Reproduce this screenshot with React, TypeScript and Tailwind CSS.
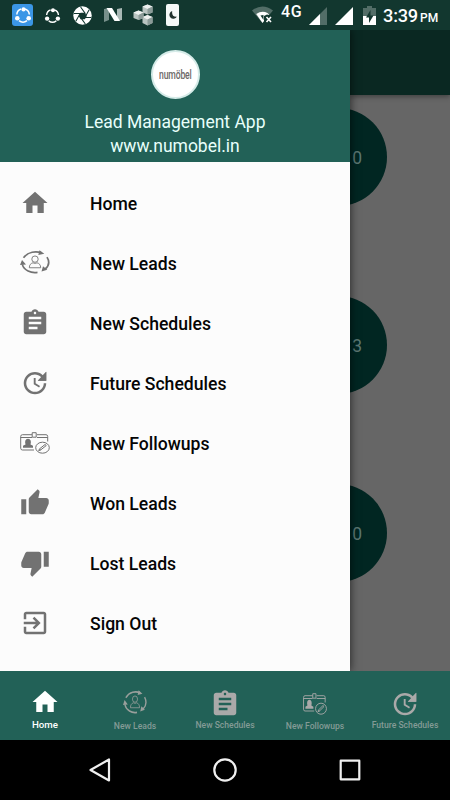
import React from "react";

type IconProps = { className?: string };

function HomeIcon({ className }: IconProps) {
  return (
    <svg viewBox="0 0 24 24" fill="currentColor" className={className}>
      <path d="M10 20v-6h4v6h5v-8h3L12 3 2 12h3v8z" />
    </svg>
  );
}

function LeadsIcon({ className }: IconProps) {
  return (
    <svg viewBox="0 0 30 25" preserveAspectRatio="none" className={className}>
      <g fill="none" stroke="currentColor" strokeWidth="1.700">
        <path d="M3.500 8C8 1.800 16 1 21.500 3" />
        <path d="M27 7.500c2.600 4.300 2 9-2 12.500" />
        <path d="M17.500 23.300C11 24.300 4 21.500 2.300 15" />
      </g>
      <path d="M19.500.3l4.800 3.700-6 1.200zM21.500 22.500l1.500-5.500 4.300 3.500zM0 15.500L2 10.500l4 4.500z" fill="currentColor" />
      <g fill="none" stroke="currentColor" strokeWidth="0.9">
        <ellipse cx="15" cy="9.500" rx="3.200" ry="3.300" />
        <path d="M9.300 18.500c0-3 1.500-4.600 3.700-5.200 1.500.8 2.700.8 4 0 2.200.6 3.700 2.200 3.700 5.200z" />
      </g>
    </svg>
  );
}

function ClipboardIcon({ className }: IconProps) {
  return (
    <svg viewBox="0 0 24 24" fill="currentColor" className={className}>
      <path d="M19 3h-4.180C14.400 1.840 13.300 1 12 1s-2.400.84-2.820 2H5c-1.100 0-2 .9-2 2v14c0 1.100.9 2 2 2h14c1.100 0 2-.9 2-2V5c0-1.100-.9-2-2-2zm-7 0c.55 0 1 .45 1 1s-.45 1-1 1-1-.45-1-1 .45-1 1-1zm2 14H7v-2h7v2zm3-4H7v-2h10v2zm0-4H7V7h10v2z" />
    </svg>
  );
}

function UpdateIcon({ className }: IconProps) {
  return (
    <svg viewBox="0 0 24 24" fill="currentColor" className={className}>
      <path d="M21 3v7.120h-6.780z" />
      <path d="M21 10.120h-6.780l2.740-2.820c-2.730-2.700-7.150-2.800-9.880-.1-2.730 2.710-2.730 7.080 0 9.790s7.150 2.710 9.880 0C18.320 15.650 19 14.080 19 12.100h2c0 1.980-.88 4.550-2.640 6.290-3.510 3.480-9.210 3.480-12.720 0-3.500-3.470-3.530-9.110-.02-12.580s9.140-3.470 12.650 0L21 3v7.120zM12.500 8v4.250l3.500 2.080-.72 1.210L11 13V8h1.500z" />
    </svg>
  );
}

function FollowupsIcon({ className }: IconProps) {
  return (
    <svg viewBox="0 0 30 22" preserveAspectRatio="none" className={className}>
      <g fill="none" stroke="currentColor" strokeWidth="1">
        <path d="M14 18H2.500Q.7 18 .7 16.200V4.500Q.7 2.700 2.500 2.700h9.500M17 2.700h9q1.700 0 1.700 1.800v5M.7 5.500H12M17 5.500h10.700" />
        <path d="M12.200.7h4v4.500h-4z" />
        <ellipse cx="22.500" cy="15.700" rx="6.800" ry="5.500" />
        <path d="M18.700 18.700l.8-1.800 5.500-4.400 1.300 1-5.700 4.500zM19.500 17l1.300 1" />
      </g>
      <path d="M3 15.800v-2l2.500-1.200Q4 7 8 6.700q4 .3 2.500 5.900l2.500 1.200v2z" fill="currentColor" />
    </svg>
  );
}

function ThumbUpIcon({ className }: IconProps) {
  return (
    <svg viewBox="0 0 24 24" fill="currentColor" className={className}>
      <path d="M1 21h4V9H1v12zm22-11c0-1.100-.9-2-2-2h-6.310l.95-4.570.03-.32c0-.41-.17-.79-.44-1.060L14.170 1 7.590 7.590C7.220 7.950 7 8.450 7 9v10c0 1.100.9 2 2 2h9c.83 0 1.540-.5 1.840-1.220l3.020-7.050c.09-.23.14-.47.14-.73v-2z" />
    </svg>
  );
}

function ThumbDownIcon({ className }: IconProps) {
  return (
    <svg viewBox="0 0 24 24" fill="currentColor" className={className}>
      <path d="M15 3H6c-.83 0-1.540.5-1.840 1.220l-3.020 7.050c-.09.23-.14.47-.14.73v2c0 1.100.9 2 2 2h6.310l-.95 4.570-.03.32c0 .41.17.79.44 1.060L9.830 23l6.590-6.590c.36-.36.58-.86.58-1.410V5c0-1.100-.9-2-2-2zm4 0v12h4V3h-4z" />
    </svg>
  );
}

function ExitIcon({ className }: IconProps) {
  return (
    <svg viewBox="0 0 24 24" fill="currentColor" className={className}>
      <path d="M10.090 15.590L11.500 17l5-5-5-5-1.410 1.410L12.670 11H3v2h9.670l-2.580 2.590zM19 3H5c-1.110 0-2 .9-2 2v4h2V5h14v14H5v-4H3v4c0 1.100.89 2 2 2h14c1.100 0 2-.9 2-2V5c0-1.100-.9-2-2-2z" />
    </svg>
  );
}

function ShareRing({ className }: IconProps) {
  return (
    <svg viewBox="0 0 18 18" className={className}>
      <g fill="none" stroke="#fff" strokeWidth="1.500">
        <path d="M2.800 8.500C3 5.800 4.500 3.800 7 3" />
        <path d="M11 3c2.600.8 4.100 2.700 4.300 5.500" />
        <path d="M5 14.700c2.500 1.900 5.500 1.900 8 0" />
      </g>
      <g fill="#fff">
        <circle cx="9.500" cy="3.400" r="2.100" />
        <circle cx="3.300" cy="12.300" r="2.300" />
        <circle cx="14.700" cy="12.300" r="2.300" />
      </g>
    </svg>
  );
}

function ApertureIcon() {
  return (
    <svg viewBox="0 0 20 20" className="ml-[12px] h-[19px] w-[19px]">
      <circle cx="10" cy="10" r="9.700" fill="#fff" />
      <g stroke="#12372f" strokeWidth="1.100">
        <path d="M8 1l5 7M17 4l-4.500 8M19 12h-9M13 19l-5-7M3 16l4.500-8M1 8h9" />
      </g>
      <path d="M8 7h4.500l2 3.500-2 3.500H8l-2-3.500z" fill="#12372f" />
    </svg>
  );
}

function NougatIcon() {
  return (
    <svg viewBox="0 0 20 16" className="ml-[11px] h-[16px] w-[20px]">
      <path d="M1 2l5-1v12l-5 2z" fill="#77908b" />
      <path d="M14 2l5-1v12l-5 1z" fill="#a9b8b5" />
      <path d="M3.500 1h5.500l8 13h-5.500z" fill="#fff" />
    </svg>
  );
}

function CubesIcon() {
  return (
    <svg viewBox="0 0 22 22" className="ml-[10px] h-[22px] w-[22px]">
      <path d="M9.500 2.500L14.500.5l5 2v6l-5 2-5-2zM.5 8.500l5-2 5 2v5.500l-5 2-5-2zM9.500 13l5-2 5 2v6l-5 2.500-5-2.500z" fill="#b9c4c1" />
      <path d="M9.500 2.500L14.500.5l5 2-5 2.500zM.5 8.500l5-2 5 2-5 2.500zM9.500 13l5-2 5 2-5 2.500z" fill="#edf0ef" />
      <path d="M14.500 5l5-2.500v6l-5 2zM5.500 11l5-2.500V14l-5 2zM14.500 15.500l5-2.500v6l-5 2.500z" fill="#8b9b98" />
    </svg>
  );
}

function StatusBar() {
  return (
    <header className="flex h-[30px] shrink-0 items-center bg-[#12372f] pl-[12px] text-white">
      <div className="flex h-[22px] w-[21px] items-center justify-center rounded-[3px] bg-[#3b96e6]">
        <ShareRing className="h-[18px] w-[18px]" />
      </div>
      <ShareRing className="ml-[11px] h-[17px] w-[17px]" />
      <ApertureIcon />
      <NougatIcon />
      <CubesIcon />
      <div className="ml-[11px] flex h-[22px] w-[13px] items-center justify-center rounded-[2px] bg-[#f5f9f8]">
        <svg viewBox="0 0 10 10" className="h-[8px] w-[8px]">
          <path d="M4 0a5 5 0 1 0 6 7Q3 7.500 4 0z" fill="#20322e" />
        </svg>
      </div>
      <svg viewBox="0 0 22 18" className="ml-[73px] h-[18px] w-[22px]">
        <path d="M0 4.500Q10.500-3.500 21 4.500L10.500 17z" fill="#526d67" />
        <path d="M4.200 8Q10 4 15.500 7l1.500 1.500-6.500 8.500z" fill="#fff" />
        <path d="M12 10l3-1.500 5 1.500v8h-8z" fill="#12372f" />
        <path d="M8.500 9.500l3-.5v5z" fill="#12372f" />
        <path d="M14.500 11l4.500 5m0-5l-4.500 5" stroke="#fff" strokeWidth="1.600" />
      </svg>
      <span className="mb-[6px] ml-[7px] w-[23px] whitespace-nowrap text-[16px] leading-none font-medium tracking-[0.6px]">4G</span>
      <svg viewBox="0 0 18 18" className="ml-[5px] mt-[2px] h-[18px] w-[18px]">
        <path d="M18 0v18H0z" fill="#526d67" />
        <path d="M11 7v11H0z" fill="#fff" />
      </svg>
      <svg viewBox="0 0 18 18" className="ml-[8px] mt-[2px] h-[18px] w-[18px]">
        <path d="M18 0v18H0z" fill="#fff" />
      </svg>
      <svg viewBox="0 0 13 19" className="ml-[10px] h-[19px] w-[13px]">
        <path d="M4 0h5v2h4v8H0V2h4z" fill="#526d67" />
        <path d="M0 10h13v9H0z" fill="#fff" />
        <path d="M7.500 4L3 11.500h3V17l4.500-7.500h-3z" fill="#12372f" />
      </svg>
      <span className="ml-[7px] mt-[2px] w-[33px] whitespace-nowrap text-[18.200px] leading-none font-medium tracking-[-0.2px]">3:39</span>
      <span className="ml-[4px] mt-[5px] text-[12px] leading-none font-medium">PM</span>
    </header>
  );
}

const menu = [
  { label: "Home", icon: <HomeIcon className="h-[30px] w-[30px]" /> },
  { label: "New Leads", icon: <LeadsIcon className="mb-[3px] h-[24px] w-[30px]" /> },
  { label: "New Schedules", icon: <ClipboardIcon className="h-[30px] w-[30px]" /> },
  { label: "Future Schedules", icon: <UpdateIcon className="h-[30px] w-[30px]" /> },
  { label: "New Followups", icon: <FollowupsIcon className="h-[22px] w-[30px]" /> },
  { label: "Won Leads", icon: <ThumbUpIcon className="h-[30px] w-[30px]" /> },
  { label: "Lost Leads", icon: <ThumbDownIcon className="h-[30px] w-[30px]" /> },
  { label: "Sign Out", icon: <ExitIcon className="h-[30px] w-[30px]" /> },
];

function Drawer() {
  return (
    <aside className="z-10 w-[350px] shrink-0 bg-[#fcfcfc] shadow-[1px_0_8px_rgba(0,0,0,0.55)]">
      <div className="flex h-[132px] flex-col items-center bg-[#226157] pt-[20px] text-[#e8fffb]">
        <div className="flex h-[49px] w-[49px] items-center justify-center rounded-full border-2 border-[#d5ebe8] bg-white">
          <span className="scale-x-[0.64] text-[13.500px] leading-none font-medium tracking-[-0.3px] text-[#6d6968]">numöbel</span>
        </div>
        <p className="mt-[11px] text-[17.500px] leading-[24px]">Lead Management App</p>
        <p className="text-[17.500px] leading-[24px]">www.numobel.in</p>
      </div>
      <nav className="pt-[11px]">
        {menu.map((item) => (
          <a key={item.label} className="flex h-[60px] items-center pl-[20px]">
            <span className="flex w-[70px] items-center text-[#727272]">{item.icon}</span>
            <span className="pt-[2px] text-[17.600px] leading-[24px] font-medium text-[#050505]">{item.label}</span>
          </a>
        ))}
      </nav>
    </aside>
  );
}

function Counter({ value }: { value: number }) {
  return (
    <div className="-ml-[61px] flex h-[98px] w-[98px] items-center justify-end rounded-full bg-[#012622] pt-[2px] pr-[25px] text-[17.500px] text-[#5b7672]">
      {value}
    </div>
  );
}

function Dashboard() {
  return (
    <main className="flex flex-1 flex-col bg-[#666666]">
      <div className="h-[65px] shrink-0 bg-[#0a2822] shadow-[0_2px_5px_rgba(0,0,0,0.35)]" />
      <div className="flex flex-col gap-[90px] pt-[13px]">
        <Counter value={0} />
        <Counter value={3} />
        <Counter value={0} />
      </div>
    </main>
  );
}

function BottomTabs() {
  return (
    <nav className="z-20 grid h-[69px] shrink-0 grid-cols-5 bg-[#226157] text-[8.600px] font-medium text-[#849b96]">
      <div className="flex flex-col items-center pt-[16px] text-white">
        <HomeIcon className="h-[30px] w-[30px]" />
        <span className="mt-[1px] text-[9.700px] leading-[14px]">Home</span>
      </div>
      <div className="flex flex-col items-center pt-[19px] text-[#999f9c]">
        <LeadsIcon className="h-[24px] w-[24px]" />
        <span className="mt-[5px] leading-[14px] text-[#849b96]">New Leads</span>
      </div>
      <div className="flex flex-col items-center pt-[18px]">
        <ClipboardIcon className="h-[30px] w-[30px] text-[#aaa9a9]" />
        <span className="-mt-px leading-[14px]">New Schedules</span>
      </div>
      <div className="flex flex-col items-center pt-[22px]">
        <FollowupsIcon className="h-[22px] w-[24px] text-[#aaa9a9]" />
        <span className="mt-[4px] leading-[14px]">New Followups</span>
      </div>
      <div className="flex flex-col items-center pt-[18px]">
        <UpdateIcon className="h-[30px] w-[30px] text-[#aaa9a9]" />
        <span className="-mt-px leading-[14px]">Future Schedules</span>
      </div>
    </nav>
  );
}

function SystemNav() {
  return (
    <footer className="flex h-[60px] shrink-0 items-center justify-center gap-[101px] bg-black text-[#f0f0f0]">
      <svg viewBox="0 0 24 24" className="h-[24px] w-[24px]" fill="none" stroke="currentColor" strokeWidth="2.200" strokeLinejoin="round">
        <path d="M21 1.500v21L2.500 12z" />
      </svg>
      <svg viewBox="0 0 24 24" className="h-[24px] w-[24px]" fill="none" stroke="currentColor" strokeWidth="2.200">
        <circle cx="12" cy="12" r="10.700" />
      </svg>
      <svg viewBox="0 0 24 24" className="h-[24px] w-[24px]" fill="none" stroke="currentColor" strokeWidth="2.200" strokeLinejoin="round">
        <path d="M2.700 2.700h18.600v18.600H2.700z" />
      </svg>
    </footer>
  );
}

export default function App() {
  return (
    <div className="flex h-[800px] w-[450px] flex-col overflow-hidden bg-black font-['Roboto',sans-serif]">
      <StatusBar />
      <div className="flex h-[641px] shrink-0 overflow-hidden">
        <Drawer />
        <Dashboard />
      </div>
      <BottomTabs />
      <SystemNav />
    </div>
  );
}
